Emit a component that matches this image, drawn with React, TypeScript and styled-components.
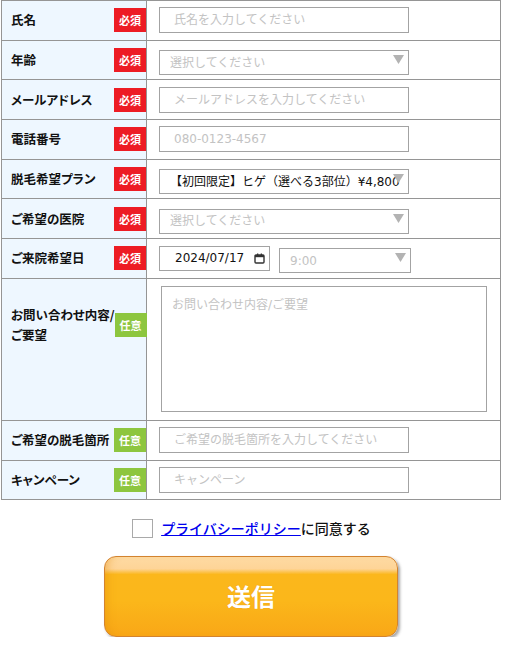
import React from "react";
import styled, { createGlobalStyle } from "styled-components";

const Global = createGlobalStyle`
  html, body { margin: 0; padding: 0; background: #fff; }
  body { font-family: "Noto Sans CJK JP", "Noto Sans", sans-serif; color: #111; }
  * { box-sizing: border-box; }
`;

const Page = styled.div`
  width: 510px;
  padding-left: 1px;
`;

const Table = styled.div`
  width: 500px;
  border: 1px solid #959595;
  border-bottom: none;
`;

const Row = styled.div<{ $h: number }>`
  display: flex;
  height: ${(p) => p.$h}px;
  border-bottom: 1px solid #959595;
`;

const LabelCell = styled.div<{ $padBottom?: number }>`
  width: 145px;
  flex: none;
  display: flex;
  align-items: center;
  justify-content: space-between;
  padding-left: 9px;
  padding-bottom: ${(p) => p.$padBottom ?? 0}px;
  background: #eef7ff;
  border-right: 1px solid #959595;
`;

const LabelText = styled.span`
  font-size: 12.5px;
  font-weight: 700;
  line-height: 20px;
  white-space: nowrap;
  color: #111;
  font-feature-settings: "palt" 1;
`;

const Badge = styled.span<{ $kind: "req" | "opt" }>`
  flex: none;
  width: 32px;
  height: 24px;
  display: flex;
  align-items: center;
  justify-content: center;
  background: ${(p) => (p.$kind === "req" ? "#ed1c24" : "#8dc63f")};
  color: #fff;
  font-size: 11px;
  font-weight: 700;
  letter-spacing: 0;
`;

const FieldCell = styled.div`
  flex: 1;
  display: flex;
  align-items: center;
  gap: 9px;
  padding-left: 12px;
  background: #fff;
`;

const fieldFont = `"DejaVu Sans", "Noto Sans CJK JP", sans-serif`;

const TextInput = styled.input`
  width: 250px;
  height: 26px;
  border: 1px solid #a3a3a3;
  border-radius: 0;
  padding: 0 14px;
  font-family: ${fieldFont};
  font-size: 12px;
  color: #222;
  outline: none;
  background: #fff;
  &::placeholder { color: #c3c3c3; }
`;

const SelectWrap = styled.div<{ $w: number }>`
  position: relative;
  width: ${(p) => p.$w}px;
  height: 25px;
`;

const Select = styled.select<{ $muted?: boolean }>`
  appearance: none;
  -webkit-appearance: none;
  width: 100%;
  height: 100%;
  border: 1px solid #a3a3a3;
  border-radius: 0;
  padding: 0 4px 0 10px;
  font-family: ${fieldFont};
  font-size: 12px;
  color: ${(p) => (p.$muted ? "#c3c3c3" : "#111")};
  background: #fff;
  outline: none;
`;

const Arrow = styled.svg`
  position: absolute;
  right: 5px;
  top: 50%;
  margin-top: -5px;
  width: 11px;
  height: 9px;
  pointer-events: none;
`;

const DateBox = styled.div`
  width: 111px;
  height: 25px;
  border: 1px solid #a3a3a3;
  display: flex;
  align-items: center;
  justify-content: space-between;
  padding: 0 4px 0 15px;
  font-family: ${fieldFont};
  font-size: 12px;
  color: #111;
`;

const TextArea = styled.textarea`
  width: 326px;
  height: 126px;
  margin-left: 2px;
  border: 1px solid #a3a3a3;
  border-radius: 0;
  padding: 8px 10px;
  resize: none;
  font-family: ${fieldFont};
  font-size: 12px;
  outline: none;
  &::placeholder { color: #c3c3c3; }
`;

const Agree = styled.div`
  width: 500px;
  display: flex;
  justify-content: center;
  align-items: center;
  gap: 9px;
  margin-top: 18px;
  font-size: 14px;
  color: #111;
`;

const Check = styled.input`
  appearance: none;
  -webkit-appearance: none;
  margin: 0;
  width: 21px;
  height: 19px;
  border: 1px solid #a9a9a9;
  background: #fff;
  position: relative;
  left: 1px;
`;

const AgreeText = styled.span`
  font-weight: 500;
  line-height: 20px;
`;

const Link = styled.a`
  color: #0000ee;
  text-decoration: underline;
`;

const ButtonRow = styled.div`
  width: 500px;
  display: flex;
  justify-content: center;
  margin-top: 18px;
`;

const SubmitButton = styled.button`
  width: 294px;
  height: 81px;
  border: 1px solid #d3832f;
  border-radius: 12px;
  background: linear-gradient(
    to bottom,
    #fedba3 0%,
    #fed497 15%,
    #fbb71c 22%,
    #fbb71a 55%,
    #f9a717 100%
  );
  box-shadow: 2px 2px 3px rgba(0, 0, 0, 0.35),
    inset 8px 0 8px -6px rgba(226, 140, 10, 0.45);
  color: #fff;
  font-family: "Noto Sans CJK JP", sans-serif;
  font-size: 24px;
  font-weight: 700;
  line-height: 1;
  letter-spacing: 0;
  padding: 0 0 2px;
  cursor: pointer;
  text-shadow: 0 0 1px rgba(200, 110, 0, 0.4);
`;

const CalIcon = () => (
  <svg width="11" height="11" viewBox="0 0 11 11">
    <rect x="1" y="2" width="9" height="8" fill="none" stroke="#333" strokeWidth="1.4" rx="1" />
    <rect x="1" y="2" width="9" height="2.2" fill="#333" />
    <rect x="3" y="0.5" width="1.3" height="2" fill="#333" />
    <rect x="6.7" y="0.5" width="1.3" height="2" fill="#333" />
  </svg>
);

const Tri = () => (
  <Arrow viewBox="0 0 11 9">
    <polygon points="0,0 11,0 5.5,9" fill="#b3b3b3" />
  </Arrow>
);

type Req = "req" | "opt";
const badgeText = (k: Req) => (k === "req" ? "必須" : "任意");

const Label: React.FC<{ kind: Req; children: React.ReactNode; padBottom?: number }> = ({
  kind,
  children,
  padBottom,
}) => (
  <LabelCell $padBottom={padBottom}>
    <LabelText>{children}</LabelText>
    <Badge $kind={kind}>{badgeText(kind)}</Badge>
  </LabelCell>
);

const H = 39.7;

export default function App() {
  return (
    <Page>
      <Global />
      <Table>
        <Row $h={H}>
          <Label kind="req">氏名</Label>
          <FieldCell>
            <TextInput placeholder="氏名を入力してください" />
          </FieldCell>
        </Row>
        <Row $h={H}>
          <Label kind="req">年齢</Label>
          <FieldCell>
            <SelectWrap $w={250}>
              <Select $muted defaultValue="">
                <option value="">選択してください</option>
              </Select>
              <Tri />
            </SelectWrap>
          </FieldCell>
        </Row>
        <Row $h={H}>
          <Label kind="req">メールアドレス</Label>
          <FieldCell>
            <TextInput placeholder="メールアドレスを入力してください" />
          </FieldCell>
        </Row>
        <Row $h={H}>
          <Label kind="req">電話番号</Label>
          <FieldCell>
            <TextInput placeholder="080-0123-4567" />
          </FieldCell>
        </Row>
        <Row $h={H}>
          <Label kind="req">脱毛希望プラン</Label>
          <FieldCell>
            <SelectWrap $w={250}>
              <Select defaultValue="a">
                <option value="a">【初回限定】ヒゲ（選べる3部位）¥4,800</option>
              </Select>
              <Tri />
            </SelectWrap>
          </FieldCell>
        </Row>
        <Row $h={H}>
          <Label kind="req">ご希望の医院</Label>
          <FieldCell>
            <SelectWrap $w={250}>
              <Select $muted defaultValue="">
                <option value="">選択してください</option>
              </Select>
              <Tri />
            </SelectWrap>
          </FieldCell>
        </Row>
        <Row $h={H}>
          <Label kind="req">ご来院希望日</Label>
          <FieldCell>
            <DateBox>
              <span>2024/07/17</span>
              <CalIcon />
            </DateBox>
            <SelectWrap $w={132}>
              <Select $muted defaultValue="9">
                <option value="9">9:00</option>
              </Select>
              <Tri />
            </SelectWrap>
          </FieldCell>
        </Row>
        <Row $h={142}>
          <Label kind="opt" padBottom={48}>
            お問い合わせ内容/
            <br />
            ご要望
          </Label>
          <FieldCell>
            <TextArea placeholder="お問い合わせ内容/ご要望" />
          </FieldCell>
        </Row>
        <Row $h={H}>
          <Label kind="opt">ご希望の脱毛箇所</Label>
          <FieldCell>
            <TextInput placeholder="ご希望の脱毛箇所を入力してください" />
          </FieldCell>
        </Row>
        <Row $h={H}>
          <Label kind="opt">キャンペーン</Label>
          <FieldCell>
            <TextInput placeholder="キャンペーン" />
          </FieldCell>
        </Row>
      </Table>
      <Agree>
        <Check type="checkbox" />
        <AgreeText>
          <Link href="#">プライバシーポリシー</Link>に同意する
        </AgreeText>
      </Agree>
      <ButtonRow>
        <SubmitButton type="button">送信</SubmitButton>
      </ButtonRow>
    </Page>
  );
}
